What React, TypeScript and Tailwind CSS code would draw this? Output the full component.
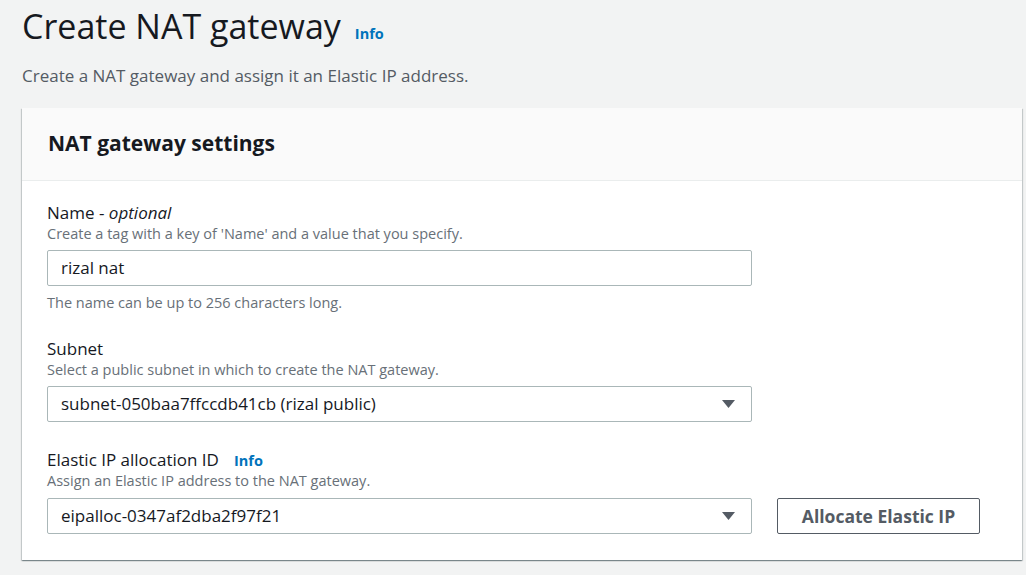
const FONT = "font-['Open_Sans','Liberation_Sans',sans-serif]";

function InfoLink() {
  return (
    <a href="#" className="text-[14.5px] font-bold text-[#0073bb] leading-none">
      Info
    </a>
  );
}

function Caret() {
  return (
    <svg width="13" height="8" viewBox="0 0 13 8" className="shrink-0">
      <path d="M0 0 H13 L6.5 8 Z" fill="#545b64" />
    </svg>
  );
}

function Select({ value }: { value: string }) {
  return (
    <div className="flex h-[36px] w-[705px] items-center justify-between rounded-[2px] border border-[#aab7b8] bg-white pl-[13px] pr-[16px]">
      <span className="text-[17px] text-[#16191f]">{value}</span>
      <Caret />
    </div>
  );
}

export default function App() {
  return (
    <div className={`min-h-screen bg-[#f2f3f3] ${FONT}`}>
      <div className="pl-[22px] pr-[4px] pt-[6px]">
        <div className="flex items-baseline gap-[14px]">
          <h1 className="text-[34px] leading-[40px] text-[#16191f]">Create NAT gateway</h1>
          <InfoLink />
        </div>
        <p className="mt-[19px] text-[17px] leading-[22px] text-[#545b64]">
          Create a NAT gateway and assign it an Elastic IP address.
        </p>

        {/* Card */}
        <div className="mt-[21px] bg-white shadow-[0_1px_1px_0_rgba(0,28,36,0.3),1px_1px_1px_0_rgba(0,28,36,0.15),-1px_1px_1px_0_rgba(0,28,36,0.15)]">
          <div className="flex h-[73px] items-center border-b border-[#eaeded] bg-[#fafafa] px-[26px]">
            <h2 className="text-[21px] font-bold text-[#16191f]">NAT gateway settings</h2>
          </div>

          <div className="pl-[25px] pr-[20px] pt-[21px] pb-[26px]">
            {/* Name */}
            <div className="text-[17px] leading-[22px] text-[#16191f]">
              Name - <i>optional</i>
            </div>
            <div className="text-[14.5px] leading-[20px] text-[#687078]">
              Create a tag with a key of 'Name' and a value that you specify.
            </div>
            <div className="mt-[6px] flex h-[36px] w-[705px] items-center rounded-[2px] border border-[#aab7b8] bg-white pl-[13px]">
              <span className="text-[17px] text-[#16191f]">rizal nat</span>
            </div>
            <div className="mt-[7px] text-[14.5px] leading-[20px] text-[#687078]">
              The name can be up to 256 characters long.
            </div>

            {/* Subnet */}
            <div className="mt-[25px] text-[17px] leading-[22px] text-[#16191f]">Subnet</div>
            <div className="text-[14.5px] leading-[20px] text-[#687078]">
              Select a public subnet in which to create the NAT gateway.
            </div>
            <div className="mt-[6px]">
              <Select value="subnet-050baa7ffccdb41cb (rizal public)" />
            </div>

            {/* Elastic IP */}
            <div className="mt-[27px] flex items-baseline gap-[15px] text-[17px] leading-[22px] text-[#16191f]">
              <span>Elastic IP allocation ID</span>
              <InfoLink />
            </div>
            <div className="text-[14.5px] leading-[20px] text-[#687078]">
              Assign an Elastic IP address to the NAT gateway.
            </div>
            <div className="mt-[7px] flex items-center gap-[25px]">
              <Select value="eipalloc-0347af2dba2f97f21" />
              <button className="h-[36px] w-[203px] rounded-[2px] border border-[#545b64] bg-white text-[17.5px] font-bold text-[#545b64]">
                Allocate Elastic IP
              </button>
            </div>
          </div>
        </div>
      </div>
    </div>
  );
}
